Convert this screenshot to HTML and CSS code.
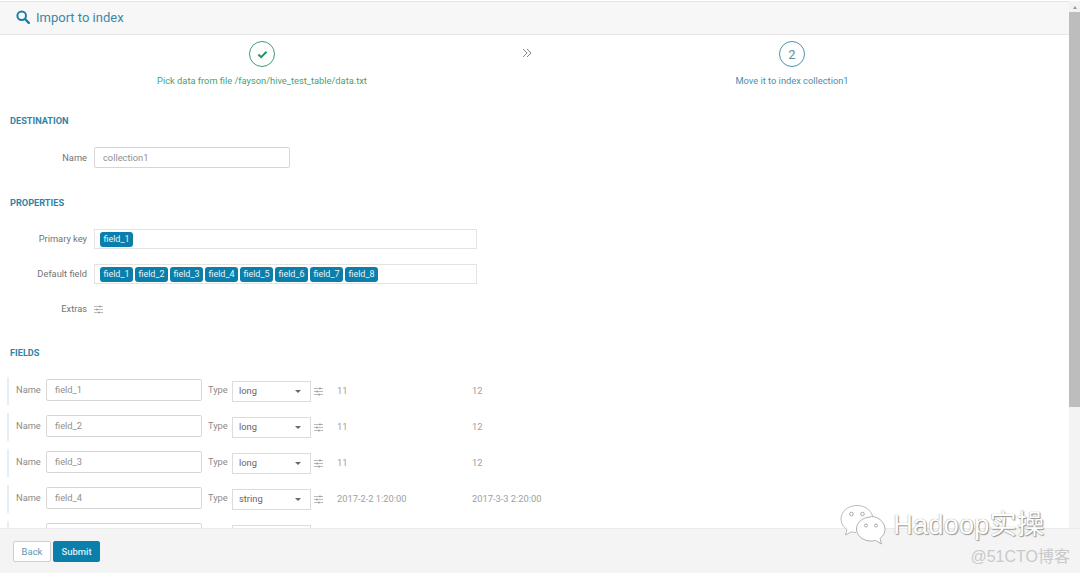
FILE: index.html
```html
<!DOCTYPE html>
<html lang="en">
<head>
    <meta charset="UTF-8">
    <title>Import to index</title>
    <link rel="stylesheet" href="styles.css">
</head>
<body>
<div class="page">
    <div class="upper">
        <div class="content">
            <div class="head">
                <svg class="head-icon" viewBox="0 0 14 14" width="14" height="14"><circle cx="5.700" cy="5.700" r="4.300" fill="none" stroke="#1a7ea8" stroke-width="2"/><path d="M9 9l3.800 3.800" stroke="#1a7ea8" stroke-width="2.400" stroke-linecap="round"/></svg>
                <span>Import to index</span>
            </div>

            <div class="steps">
                <div class="step done">
                    <div class="circle">
                        <svg viewBox="0 0 12 10" width="11" height="9"><path d="M1.500 5l3 3 6-6" fill="none" stroke="#1f9560" stroke-width="2.200"/></svg>
                    </div>
                    <div class="step-label">Pick data from file /fayson/hive_test_table/data.txt</div>
                </div>
                <div class="step todo">
                    <div class="circle">2</div>
                    <div class="step-label">Move it to index collection1</div>
                </div>
                <svg class="step-arrow" viewBox="0 0 10 10" width="10" height="10"><path d="M1 1l4 4-4 4M5 1l4 4-4 4" fill="none" stroke="#888" stroke-width="1"/></svg>
            </div>

            <h4 class="title title-dest">DESTINATION</h4>
            <div class="line line-name">
                <label class="lbl">Name</label>
                <div class="input input-dest">collection1</div>
            </div>

            <h4 class="title title-prop">PROPERTIES</h4>
            <div class="line line-key">
                <label class="lbl">Primary key</label>
                <div class="tags">
                    <span class="tag">field_1</span>
                </div>
            </div>
            <div class="line line-default">
                <label class="lbl">Default field</label>
                <div class="tags">
                    <span class="tag">field_1</span>
                    <span class="tag">field_2</span>
                    <span class="tag">field_3</span>
                    <span class="tag">field_4</span>
                    <span class="tag">field_5</span>
                    <span class="tag">field_6</span>
                    <span class="tag">field_7</span>
                    <span class="tag">field_8</span>
                </div>
            </div>
            <div class="line line-extras">
                <label class="lbl">Extras</label>
                <svg class="sliders" viewBox="0 0 9 9" width="9" height="9"><use href="#sl"/></svg>
            </div>

            <h4 class="title title-fields">FIELDS</h4>
            <div class="row">
                <span class="row-lbl">Name</span>
                <div class="input input-field">field_1</div>
                <span class="row-lbl type-lbl">Type</span>
                <div class="select">long<i class="caret"></i></div>
                <svg class="sliders" viewBox="0 0 9 9" width="9" height="9"><use href="#sl"/></svg>
                <span class="val val1">11</span>
                <span class="val">12</span>
            </div>
            <div class="row">
                <span class="row-lbl">Name</span>
                <div class="input input-field">field_2</div>
                <span class="row-lbl type-lbl">Type</span>
                <div class="select">long<i class="caret"></i></div>
                <svg class="sliders" viewBox="0 0 9 9" width="9" height="9"><use href="#sl"/></svg>
                <span class="val val1">11</span>
                <span class="val">12</span>
            </div>
            <div class="row">
                <span class="row-lbl">Name</span>
                <div class="input input-field">field_3</div>
                <span class="row-lbl type-lbl">Type</span>
                <div class="select">long<i class="caret"></i></div>
                <svg class="sliders" viewBox="0 0 9 9" width="9" height="9"><use href="#sl"/></svg>
                <span class="val val1">11</span>
                <span class="val">12</span>
            </div>
            <div class="row">
                <span class="row-lbl">Name</span>
                <div class="input input-field">field_4</div>
                <span class="row-lbl type-lbl">Type</span>
                <div class="select">string<i class="caret"></i></div>
                <svg class="sliders" viewBox="0 0 9 9" width="9" height="9"><use href="#sl"/></svg>
                <span class="val val1">2017-2-2 1:20:00</span>
                <span class="val">2017-3-3 2:20:00</span>
            </div>
            <div class="row">
                <span class="row-lbl"></span>
                <div class="input input-field"></div>
                <span class="row-lbl type-lbl"></span>
                <div class="select"></div>
            </div>
        </div>
        <div class="scrollbar">
            <i class="scroll-up"></i>
            <div class="thumb"></div>
        </div>
    </div>

    <div class="foot">
        <button class="btn">Back</button>
        <button class="btn btn-primary">Submit</button>
    </div>

    <div class="mark">
        <svg class="mark-icon" viewBox="0 0 48 42" width="48" height="42">
            <path d="M17 1.500C8 1.500 1 7.500 1 15c0 4.500 2.500 8 6 10.500L5.500 31l6-3.200c1.500.4 3 .6 4.500.7" fill="#fff" stroke="#bbb" stroke-width="1"/>
            <path d="M17 1.500c7.500 0 14 4.500 15.500 10.500" fill="none" stroke="#bbb" stroke-width="1"/>
            <circle cx="11.500" cy="10" r="1.800" fill="none" stroke="#aaa"/>
            <circle cx="22.500" cy="10" r="1.800" fill="none" stroke="#aaa"/>
            <path d="M31 13c-8 0-14.500 5.300-14.500 12S23 37 31 37c1.500 0 3-.2 4.500-.6l6 3.600-1.500-5.500c3-2.300 5-5.500 5-9 0-6.700-6-13-13.500-13z" fill="#fff" stroke="#b0b0b0" stroke-width="1"/>
            <circle cx="26" cy="21.500" r="1.500" fill="none" stroke="#aaa"/>
            <circle cx="36" cy="21.500" r="1.500" fill="none" stroke="#aaa"/>
        </svg>
        <span class="mark-text">Hadoop实操</span>
    </div>
    <div class="mark-site">@51CTO博客</div>
</div>

<svg class="defs" width="0" height="0">
    <symbol id="sl" viewBox="0 0 9 9">
        <path d="M0 1.500h9M0 4.500h9M0 7.500h9" stroke="#aaa" stroke-width=".8"/>
        <path d="M6 .5v2M3 3.500v2M5 6.500v2" stroke="#888" stroke-width="1"/>
    </symbol>
</svg>
</body>
</html>
```

FILE: styles.css
```css
* {
    margin: 0;
    padding: 0;
    box-sizing: border-box;
}

body {
    background-color: #fff;
    font-family: Roboto, "Noto Sans CJK SC", sans-serif;
    font-size: 9.3px;
    color: #737373;
}

.defs {
    display: block;
}

.page {
    width: 1080px;
    height: 573px;
    display: flex;
    flex-direction: column;
    position: relative;
    overflow: hidden;
}

.upper {
    flex: 1;
    min-height: 0;
    display: flex;
    padding-top: 1px;
}

.content {
    flex: 1;
    min-width: 0;
    overflow: hidden;
}

.head {
    height: 34px;
    padding: 0 0 2px 16px;
    display: flex;
    align-items: center;
    gap: 6px;
    background-color: #f7f7f7;
    border-top: 1px solid #e4e4e4;
    border-bottom: 1px solid #e6e6e6;
    font-size: 13px;
    color: #3d88a8;
}

.steps {
    width: 1054px;
    height: 60px;
    padding-top: 6px;
    display: grid;
    grid-template-columns: 1fr 1fr;
    column-gap: 6px;
    position: relative;
}

.step {
    display: flex;
    flex-direction: column;
    align-items: center;
    gap: 7.500px;
}

.circle {
    width: 26px;
    height: 26px;
    border-radius: 50%;
    border: 1px solid #3f9c78;
    display: flex;
    align-items: center;
    justify-content: center;
    font-size: 13px;
}

.step-label {
    line-height: 12px;
}

.done .step-label {
    color: #3fa276;
}

.todo .circle {
    border-color: #4d94ad;
    color: #5d8fa5;
}

.todo .step-label {
    color: #4d8cab;
}

.step-arrow {
    position: absolute;
    left: 522px;
    top: 13px;
}

.title {
    padding-left: 10px;
    font-size: 9.200px;
    line-height: 12px;
    font-weight: 700;
    color: #2f84a8;
}

.title-dest {
    margin-top: 20px;
}

.title-prop {
    margin-top: 29px;
}

.title-fields {
    margin-top: 33px;
}

.line {
    display: flex;
    align-items: center;
}

.line-name {
    margin-top: 20px;
}

.line-key {
    margin-top: 20px;
}

.line-default {
    margin-top: 15px;
}

.line-extras {
    margin-top: 20px;
}

.lbl {
    width: 87px;
    margin-right: 7px;
    margin-top: -1px;
    text-align: right;
}

.input {
    height: 21px;
    padding-left: 8px;
    display: flex;
    align-items: center;
    background-color: #fff;
    border: 1px solid #d6d6d6;
    border-radius: 2px;
    color: #8f8f8f;
}

.input-dest {
    width: 196px;
}

.tags {
    width: 383px;
    height: 20px;
    padding-left: 5px;
    display: flex;
    align-items: center;
    gap: 2px;
    border: 1px solid #e3e3e3;
}

.tag {
    width: 33px;
    height: 15px;
    display: flex;
    align-items: center;
    justify-content: center;
    background-color: #0b7fab;
    border-radius: 3px;
    font-size: 9px;
    color: #e8f3f7;
}

.row {
    width: 100%;
    height: 28px;
    margin-bottom: 8px;
    padding-left: 9px;
    display: flex;
    align-items: center;
    position: relative;
}

.row::before {
    content: "";
    position: absolute;
    left: 7px;
    top: 0;
    bottom: 0;
    width: 2px;
    background-color: #e3eff7;
}

.title-fields + .row {
    margin-top: 18px;
}

.row-lbl {
    width: 37px;
    padding-left: 7px;
    margin-top: -3px;
    color: #8a8a8a;
}

.input-field {
    width: 156px;
    height: 22px;
    margin-top: -3px;
}

.type-lbl {
    width: 30px;
    padding-left: 6px;
}

.select {
    width: 79px;
    height: 21px;
    margin-right: 3px;
    padding-left: 6px;
    padding-bottom: 1px;
    display: flex;
    align-items: center;
    position: relative;
    border: 1px solid #dcdcdc;
    color: #666;
}

.caret {
    position: absolute;
    right: 9px;
    top: 8px;
    border-style: solid;
    border-width: 3px 3px 0;
    border-color: #666 transparent transparent;
}

.sliders {
    flex: none;
}

.val {
    margin-top: -1px;
    color: #a0a0a0;
}

.val1 {
    width: 135px;
    margin-left: 14px;
}

.scrollbar {
    width: 11px;
    flex: none;
    background-color: #f3f3f3;
    display: flex;
    flex-direction: column;
}

.scroll-up {
    width: 0;
    height: 0;
    margin: 5px auto 3px;
    border-style: solid;
    border-width: 0 2px 3px;
    border-color: transparent transparent #999;
}

.thumb {
    height: 395px;
    background-color: #bdbdbd;
}

.foot {
    height: 45px;
    flex: none;
    padding-left: 13px;
    display: flex;
    align-items: center;
    gap: 2px;
    background-color: #f4f4f4;
    border-top: 1px solid #ececec;
}

.btn {
    width: 38px;
    height: 21px;
    background-color: #fff;
    border: 1px solid #cfcfcf;
    border-radius: 2px;
    font-family: Roboto, sans-serif;
    font-size: 9.500px;
    color: #5d97b0;
}

.btn-primary {
    width: 47px;
    background-color: #0b7fab;
    border-color: #0b7fab;
    font-weight: 500;
    color: #dcedf4;
}

/* watermark over the page */
.mark {
    position: absolute;
    left: 840px;
    top: 502px;
    display: flex;
    align-items: center;
    gap: 5px;
}

.mark-icon {
    display: block;
}

.mark-text {
    margin-bottom: 6px;
    font-size: 27.500px;
    font-family: "Liberation Sans", "Noto Sans CJK SC", sans-serif;
    color: #fff;
    text-shadow: 0 0 1px #777, 1px 1px 1px #999;
}

.mark-site {
    position: absolute;
    right: 10px;
    bottom: 6px;
    font-size: 16px;
    font-family: "Liberation Sans", "Noto Sans CJK SC", sans-serif;
    color: #c9c9c9;
}
```
